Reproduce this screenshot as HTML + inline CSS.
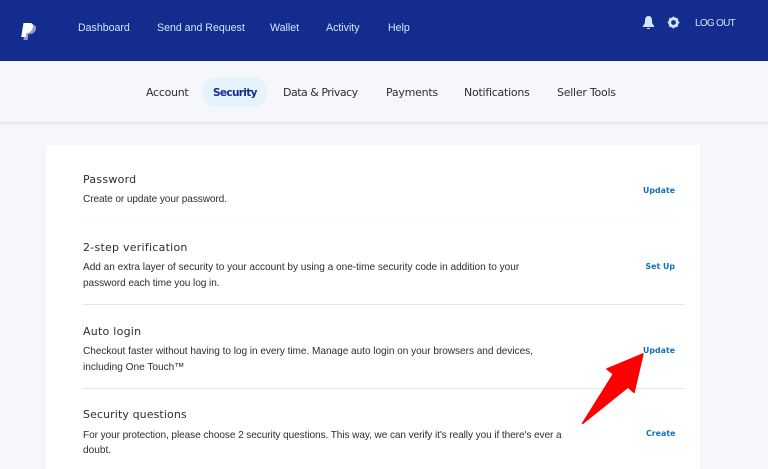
<!DOCTYPE html>
<html>
<head>
<meta charset="utf-8">
<style>
html,body{margin:0;padding:0;width:768px;height:469px;overflow:hidden;background:#f5f7fa;font-family:"Liberation Sans",sans-serif}
.a{position:absolute;white-space:nowrap;line-height:14px}
.nav{color:#d3e6fa;font-size:10.600px;top:20.500px}
.tab{color:#2c2e2f;top:85.500px;font-family:"DejaVu Sans",sans-serif;font-size:11px}
.h{color:#2c2e2f;font-family:"DejaVu Sans",sans-serif;font-size:11px;letter-spacing:.25px}
.p{color:#2c2e2f;font-size:10.100px}
.l{color:#0f72ba;font-family:"DejaVu Sans",sans-serif;font-size:7.800px;font-weight:bold;letter-spacing:.05px}
</style>
</head>
<body>
<div class="a" style="left:0;top:0;width:768px;height:61px;background:#142c8e"></div>
<svg class="a" style="left:20px;top:21px" width="18" height="20" viewBox="0 0 18 20">
<path d="M5 3.500h7c3 0 4.500 2 4 4.500-.6 3-3 5-5.500 5H8.500L7.500 19H3.500z" fill="#8f9fd6"/>
<path d="M3.500 2h6.500c2.500 0 3.500 1.500 3 4-.6 3-2.500 5-5 6H6.500l-.8 4H1.200z" fill="#fff"/>
</svg>
<span class="a nav" style="left:78px">Dashboard</span>
<span class="a nav" style="left:157px">Send and Request</span>
<span class="a nav" style="left:270px">Wallet</span>
<span class="a nav" style="left:326px">Activity</span>
<span class="a nav" style="left:388px">Help</span>
<svg class="a" style="left:642px;top:15px" width="13" height="15" viewBox="0 0 13 15">
<path d="M6.500 1C4 1 3 3 3 5.500 3 8 2.500 9.500 1 10.500V12h11v-1.500C10.500 9.500 10 8 10 5.500 10 3 9 1 6.500 1z" fill="#d3e6fa"/>
<rect x="5" y="13" width="3" height="1" fill="#d3e6fa"/>
</svg>
<svg class="a" style="left:667px;top:16px" width="13" height="13" viewBox="0 0 13 13">
<circle cx="6.500" cy="6.500" r="3.800" fill="none" stroke="#d3e6fa" stroke-width="2.800"/>
<path d="M6.500 .6v11.800M.6 6.500h11.800M2.300 2.300l8.400 8.400M10.700 2.300l-8.400 8.400" stroke="#d3e6fa" stroke-width="1.600" stroke-dasharray="2 7.800"/>
</svg>
<span class="a" style="left:695px;top:17px;color:#d3e6fa;font-size:10px;letter-spacing:-.72px">LOG OUT</span>

<div class="a" style="left:0;top:61px;width:768px;height:61px;background:#f5f7fa;box-shadow:0 1px 3px rgba(0,0,0,.12)"></div>
<div class="a" style="left:202px;top:77px;width:65px;height:30px;border-radius:15px;background:#e6f3fc"></div>
<span class="a tab" style="left:146px;letter-spacing:-.28px">Account</span>
<span class="a tab" style="left:213px;color:#142c8e;font-weight:bold;font-size:10.500px;letter-spacing:-.65px">Security</span>
<span class="a tab" style="left:283px;letter-spacing:-.5px">Data &amp; Privacy</span>
<span class="a tab" style="left:386px;letter-spacing:-.25px">Payments</span>
<span class="a tab" style="left:464px;letter-spacing:-.25px">Notifications</span>
<span class="a tab" style="left:557px;letter-spacing:-.25px">Seller Tools</span>

<div class="a" style="left:46px;top:145px;width:654px;height:324px;background:#fff"></div>

<span class="a h" style="left:83px;top:173px">Password</span>
<span class="a p" style="left:83px;top:192.500px;letter-spacing:-.1px">Create or update your password.</span>
<span class="a l" style="left:643px;top:183.500px">Update</span>
<div class="a" style="left:83px;top:221px;width:601px;height:1px;background:#fbfbfb"></div>

<span class="a h" style="left:83px;top:241px">2-step verification</span>
<span class="a p" style="left:83px;top:261px;letter-spacing:-.02px">Add an extra layer of security to your account by using a one-time security code in addition to your</span>
<span class="a p" style="left:83px;top:277px;letter-spacing:-.07px">password each time you log in.</span>
<span class="a l" style="left:645.500px;top:260px">Set Up</span>
<div class="a" style="left:83px;top:304px;width:601px;height:1px;background:#e5e5e5"></div>

<span class="a h" style="left:83px;top:324.500px">Auto login</span>
<span class="a p" style="left:83px;top:344.500px;letter-spacing:-.04px">Checkout faster without having to log in every time. Manage auto login on your browsers and devices,</span>
<span class="a p" style="left:83px;top:360.500px">including One Touch™</span>
<span class="a l" style="left:643px;top:343.500px">Update</span>
<div class="a" style="left:83px;top:388px;width:601px;height:1px;background:#e5e5e5"></div>

<span class="a h" style="left:83px;top:408px;letter-spacing:.1px">Security questions</span>
<span class="a p" style="left:83px;top:428.500px;letter-spacing:-.09px">For your protection, please choose 2 security questions. This way, we can verify it's really you if there's ever a</span>
<span class="a p" style="left:83px;top:444px">doubt.</span>
<span class="a l" style="left:646px;top:427px">Create</span>

<svg class="a" style="left:560px;top:320px" width="150" height="149" viewBox="0 0 150 149">
<path d="M83 34L47 49 53.500 54 22.500 103.500 68 67 74 72.500z" fill="#fe0000" stroke="#fe0000" stroke-width="1.500" stroke-linejoin="round"/>
</svg>
</body>
</html>
